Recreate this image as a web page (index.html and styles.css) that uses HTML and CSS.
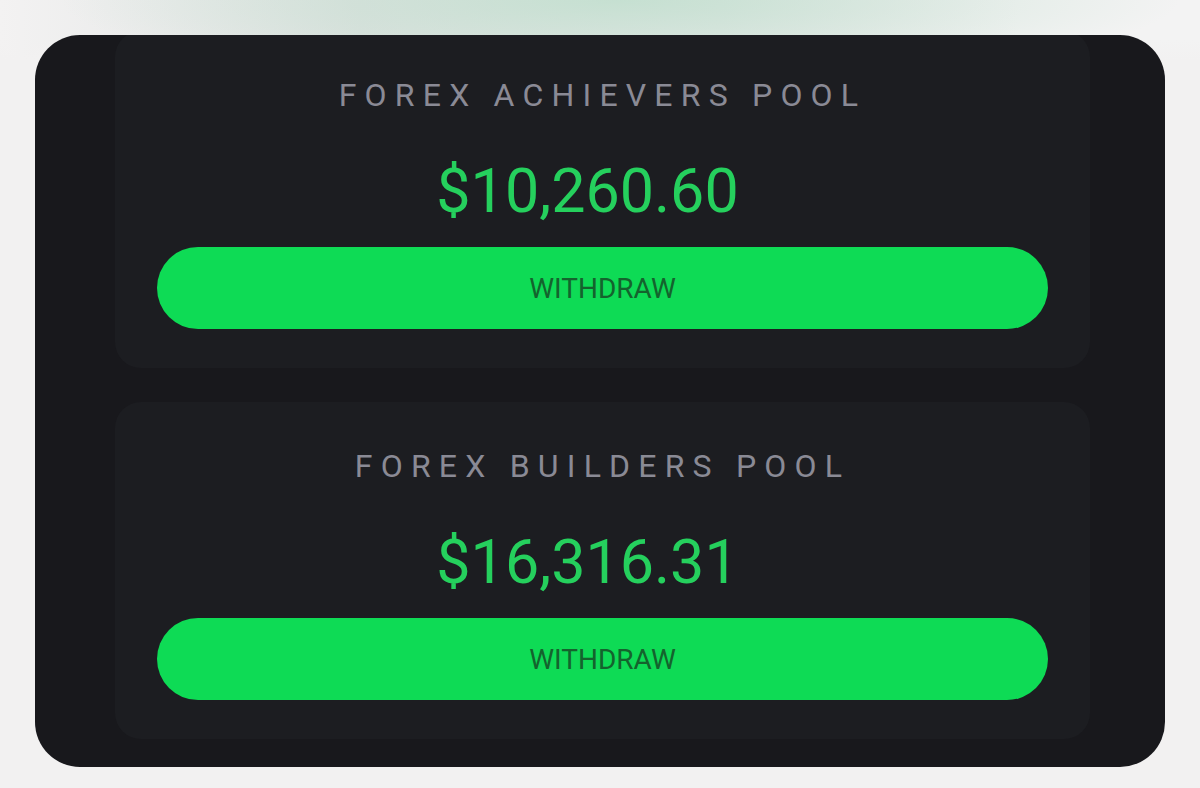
FILE: index.html
```html
<!DOCTYPE html>
<html lang="en">
<head>
<meta charset="utf-8">
<title>Forex Pools</title>
<link rel="stylesheet" href="styles.css">
</head>
<body>
<div class="frame">
  <div class="panel">
    <div class="stack">
      <section class="card">
        <h2 class="label">FOREX ACHIEVERS POOL</h2>
        <div class="amount">$10,260.60</div>
        <button class="withdraw" type="button">WITHDRAW</button>
      </section>
      <section class="card">
        <h2 class="label">FOREX BUILDERS POOL</h2>
        <div class="amount">$16,316.31</div>
        <button class="withdraw" type="button">WITHDRAW</button>
      </section>
    </div>
  </div>
</div>
</body>
</html>
```

FILE: styles.css
```css
* { box-sizing: border-box; }
html, body { margin: 0; height: 100%; }
body {
  font-family: Roboto, "Liberation Sans", sans-serif;
  background:
    radial-gradient(ellipse 560px 80px at 620px 0, rgba(190, 222, 204, 0.8), rgba(190, 222, 204, 0) 100%),
    linear-gradient(90deg, #f3f2f2 0%, #dfe2e1 30%, #e6e9e8 60%, #f3f3f3 85%);
  background-color: #f2f1f1;
}
.frame {
  width: 1200px;
  height: 788px;
  padding: 35px 35px 21px 35px;
  background: linear-gradient(180deg, rgba(242,241,241,0) 0, rgba(242,241,241,0) 40px, #f2f1f1 60px);
}
.panel {
  height: 732px;
  background: #18181c;
  border-radius: 45px;
  overflow: hidden;
}
.stack {
  margin-top: -4px;
  padding: 0 75px 0 80px;
  display: flex;
  flex-direction: column;
  gap: 34px;
}
.card {
  background: #1c1d21;
  border-radius: 26px;
  padding: 48px 42px 39px;
  display: flex;
  flex-direction: column;
  align-items: center;
}
.label {
  margin: 0;
  font-size: 32px;
  line-height: 32px;
  font-weight: 400;
  letter-spacing: 8.2px;
  color: #8a8a95;
}
.amount {
  margin-top: 49px;
  padding-right: 30px;
  font-size: 61px;
  line-height: 62px;
  color: #25d05d;
}
.withdraw {
  margin-top: 25px;
  width: 100%;
  height: 82px;
  border: 0;
  border-radius: 41px;
  background: #0edb55;
  font-family: Roboto, "Liberation Sans", sans-serif;
  font-size: 28px;
  color: #14632d;
  padding: 0;
  cursor: pointer;
}
```
